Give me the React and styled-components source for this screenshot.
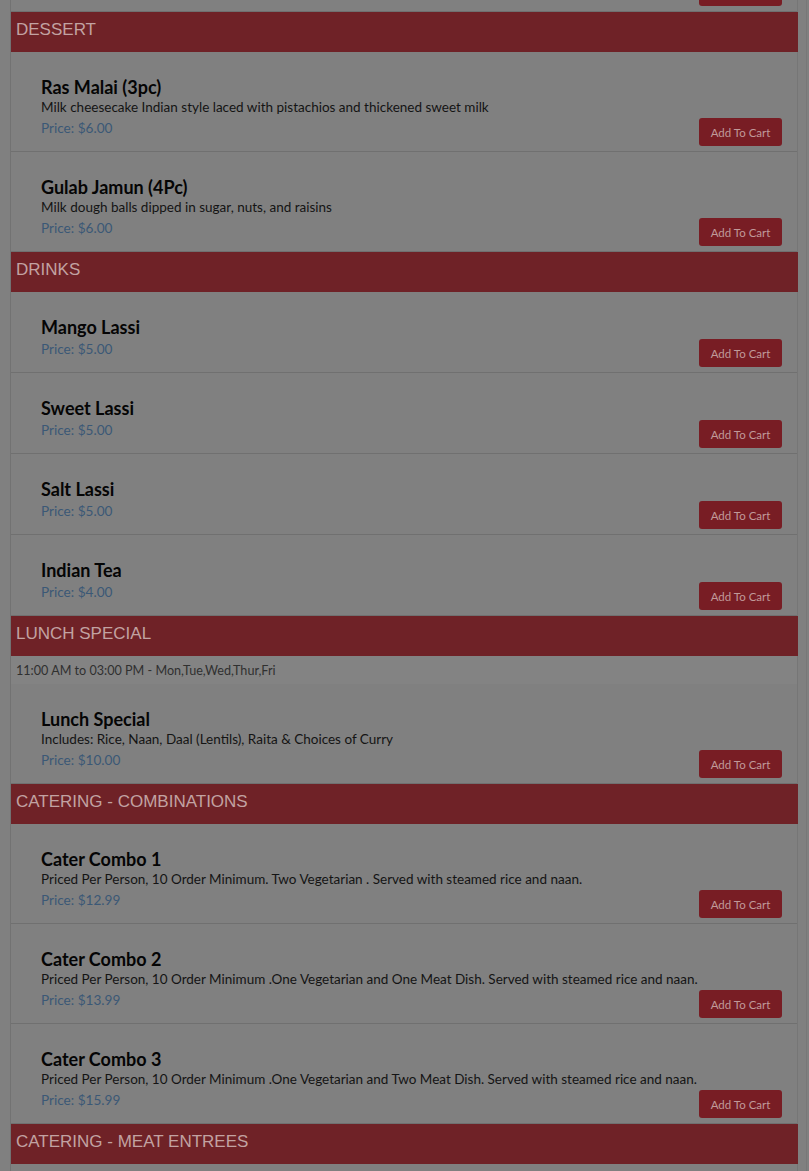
import React from 'react';
import styled, { createGlobalStyle } from 'styled-components';

const menu = [
  {
    title: 'DESSERT',
    items: [
      { name: 'Ras Malai (3pc)', desc: 'Milk cheesecake Indian style laced with pistachios and thickened sweet milk', price: '6.00' },
      { name: 'Gulab Jamun (4Pc)', desc: 'Milk dough balls dipped in sugar, nuts, and raisins', price: '6.00' },
    ],
  },
  {
    title: 'DRINKS',
    items: [
      { name: 'Mango Lassi', price: '5.00' },
      { name: 'Sweet Lassi', price: '5.00' },
      { name: 'Salt Lassi', price: '5.00' },
      { name: 'Indian Tea', price: '4.00' },
    ],
  },
  {
    title: 'LUNCH SPECIAL',
    hours: '11:00 AM to 03:00 PM - Mon,Tue,Wed,Thur,Fri',
    items: [
      { name: 'Lunch Special', desc: 'Includes: Rice, Naan, Daal (Lentils), Raita & Choices of Curry', price: '10.00' },
    ],
  },
  {
    title: 'CATERING - COMBINATIONS',
    items: [
      { name: 'Cater Combo 1', desc: 'Priced Per Person, 10 Order Minimum. Two Vegetarian . Served with steamed rice and naan.', price: '12.99' },
      { name: 'Cater Combo 2', desc: 'Priced Per Person, 10 Order Minimum .One Vegetarian and One Meat Dish. Served with steamed rice and naan.', price: '13.99' },
      { name: 'Cater Combo 3', desc: 'Priced Per Person, 10 Order Minimum .One Vegetarian and Two Meat Dish. Served with steamed rice and naan.', price: '15.99' },
    ],
  },
  {
    title: 'CATERING - MEAT ENTREES',
    items: [],
  },
];

function Item({ item }) {
  return (
    <ItemRow>
      <ItemInfo>
        <ItemName>{item.name}</ItemName>
        {item.desc && <ItemDesc>{item.desc}</ItemDesc>}
        <ItemPrice>Price: ${item.price}</ItemPrice>
      </ItemInfo>
      <CartButton>Add To Cart</CartButton>
    </ItemRow>
  );
}

export default function App() {
  return (
    <Page>
      <GlobalStyle />
      <MenuPanel>
        {/* the end of the item above, scrolled out of view */}
        <ItemTail>
          <TailButton aria-hidden="true" />
        </ItemTail>
        {menu.map((section) => (
          <Section key={section.title}>
            <SectionHeader>{section.title}</SectionHeader>
            {section.hours && <Hours>{section.hours}</Hours>}
            {section.items.map((item) => (
              <Item key={item.name} item={item} />
            ))}
          </Section>
        ))}
      </MenuPanel>
      <EdgeLine />
    </Page>
  );
}

const GlobalStyle = createGlobalStyle`
  html, body {
    margin: 0;
    padding: 0;
    background: #808080;
  }
  body {
    font-family: Lato, "Liberation Sans", sans-serif;
  }
`;

const Page = styled.div`
  display: flex;
  height: 1171px;
  overflow: hidden;
  background: #808080;
`;

const MenuPanel = styled.div`
  margin-left: 10px;
  width: 786px;
  border-left: 1px solid #727272;
  border-right: 1px solid #767676;
  display: flex;
  flex-direction: column;
  align-self: stretch;
`;

const EdgeLine = styled.div`
  margin-left: 8px;
  width: 1px;
  background: #787878;
`;

const ItemTail = styled.div`
  height: 11px;
  display: flex;
  justify-content: flex-end;
  align-items: flex-end;
  padding-right: 15px;
  border-bottom: 1px solid #707070;
`;

const Section = styled.div`
  display: flex;
  flex-direction: column;
`;

const SectionHeader = styled.div`
  height: 40px;
  padding: 8px 5px 0;
  box-sizing: border-box;
  background: #6f2227;
  color: #c2a2a2;
  font-family: "Liberation Sans", Arial, sans-serif;
  font-size: 17px;
  line-height: 20px;
  margin-right: -1px;
`;

const Hours = styled.div`
  height: 28px;
  padding: 0 5px;
  display: flex;
  align-items: center;
  background: #838383;
  color: #303030;
  font-size: 12.6px;
`;

const ItemRow = styled.div`
  display: flex;
  justify-content: space-between;
  align-items: flex-end;
  padding: 24px 15px 5px 30px;
  border-bottom: 1px solid #707070;
`;

const ItemInfo = styled.div`
  flex: 1;
  min-width: 0;
  display: flex;
  flex-direction: column;
  padding-bottom: 8px;
`;

const ItemName = styled.div`
  font-size: 18px;
  font-weight: 700;
  line-height: 22px;
  color: #050505;
`;

const ItemDesc = styled.div`
  font-size: 13.5px;
  line-height: 19px;
  color: #141414;
  white-space: nowrap;
`;

const ItemPrice = styled.div`
  font-size: 13.6px;
  line-height: 22px;
  margin-bottom: -1px;
  color: #3b5876;
`;

const CartButton = styled.button`
  flex-shrink: 0;
  width: 83px;
  height: 28px;
  padding: 0;
  border: none;
  border-radius: 3px;
  background: #781d24;
  color: #c09a9a;
  font-family: Lato, "Liberation Sans", sans-serif;
  font-size: 11.5px;
  cursor: pointer;
`;

const TailButton = styled(CartButton)`
  margin-bottom: 5px;
  height: 6px;
  border-radius: 0 0 3px 3px;
`;
